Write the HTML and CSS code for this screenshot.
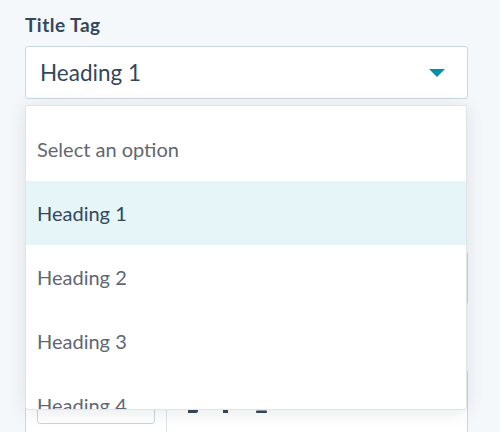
FILE: index.html
```html
<!DOCTYPE html>
<html>
<head>
<meta charset="utf-8">
<link rel="stylesheet" href="styles.css">
</head>
<body>
<div class="panel">
  <div class="label">Title Tag</div>
  <div class="select">
    <span class="value">Heading 1</span>
    <svg class="caret" width="16" height="8" viewBox="0 0 16 8"><path d="M0 0h16L8 8z" fill="#0091ae"/></svg>
  </div>
  <div class="field"></div>
  <div class="editor">
    <div class="size-wrap"><div class="size-input"></div></div>
    <div class="tools">
      <svg class="ic-b" width="10" height="14" viewBox="0 0 10 14"><path d="M0 0h5.5a3.5 3.5 0 0 1 2 6.3A3.6 3.6 0 0 1 6 14H0z" fill="#33475b"/></svg>
      <svg class="ic-i" width="7" height="14" viewBox="0 0 7 14"><path d="M2 0h5v3H5.5L3.5 11H5v3H0v-3h1.5L3.5 3H2z" fill="#33475b"/></svg>
      <svg class="ic-u" width="11" height="14" viewBox="0 0 11 14"><path d="M1.5 0v6a4 4 0 0 0 8 0V0" fill="none" stroke="#33475b" stroke-width="2"/><rect x="0" y="11.5" width="11" height="2.5" rx="1" fill="#33475b"/></svg>
    </div>
  </div>
</div>
<div class="dropdown">
  <div class="option">Select an option</div>
  <div class="option active">Heading 1</div>
  <div class="option">Heading 2</div>
  <div class="option">Heading 3</div>
  <div class="option">Heading 4</div>
</div>
</body>
</html>
```
FILE: styles.css
```css
html, body {
  margin: 0;
  padding: 0;
  background: #f5f8fa;
  font-family: Lato, "Liberation Sans", sans-serif;
  width: 500px;
  height: 432px;
  overflow: hidden;
}

.panel {
  padding: 14px 32px 0 25px;
}

.label {
  font-weight: 700;
  font-size: 19px;
  line-height: 22px;
  letter-spacing: 0.5px;
  color: #33475b;
  margin-bottom: 10px;
}

.select {
  height: 53px;
  box-sizing: border-box;
  border: 1px solid #cbd6e2;
  border-radius: 3px;
  background: #fff;
  display: flex;
  align-items: center;
  justify-content: space-between;
  padding: 0 22px 0 14px;
  font-size: 22.5px;
  color: #33475b;
}

.caret {
  display: block;
}

.field {
  margin-top: 152px;
  height: 54px;
  box-sizing: border-box;
  border: 1px solid #cbd6e2;
  border-radius: 3px;
  background: #fff;
}

.editor {
  margin-top: 64px;
  height: 90px;
  box-sizing: border-box;
  border: 1px solid #cbd6e2;
  border-radius: 3px;
  background: #fff;
  display: flex;
  padding: 0 11px;
}

.size-wrap {
  padding-top: 16px;
}

.size-input {
  width: 118px;
  height: 38px;
  box-sizing: border-box;
  border: 1px solid #cbd6e2;
  border-radius: 3px;
  background: #fff;
}

.tools {
  margin-left: 11px;
  border-left: 1px solid #dfe3eb;
  display: flex;
  align-items: flex-start;
  padding: 29px 0 0 21px;
}

.tools svg {
  display: block;
}

.ic-i {
  margin-left: 25px;
}

.ic-u {
  margin-left: 26px;
}

.dropdown {
  position: absolute;
  top: 105px;
  left: 25px;
  width: 442px;
  height: 305px;
  box-sizing: border-box;
  border: 1px solid #dfe3eb;
  border-radius: 2px 2px 3px 3px;
  background: #fff;
  overflow: hidden;
  padding-top: 11px;
  box-shadow: 0 2px 18px rgba(45, 62, 80, 0.12);
}

.option {
  height: 64px;
  display: flex;
  align-items: center;
  padding-left: 11px;
  font-size: 20px;
  color: #5f6770;
}

.option.active {
  background: #e5f5f8;
  color: #33475b;
}
```
